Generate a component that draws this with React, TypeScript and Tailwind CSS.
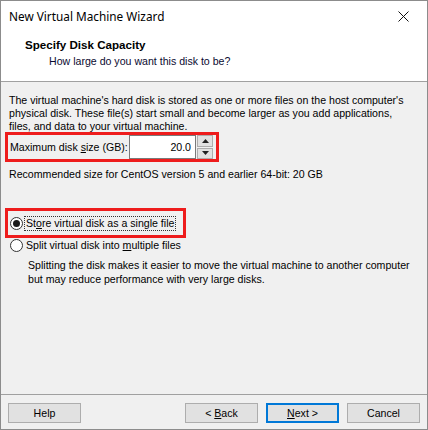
import React from "react";

function Radio({ checked }: { checked?: boolean }) {
  return (
    <span className="relative flex h-[13px] w-[13px] shrink-0 items-center justify-center rounded-full border border-[#333333] bg-white">
      {checked && <span className="h-[7px] w-[7px] rounded-full bg-[#1a1a1a]" />}
    </span>
  );
}

function Button({
  children,
  primary,
}: {
  children: React.ReactNode;
  primary?: boolean;
}) {
  return (
    <button
      className={
        primary
          ? "flex h-[20px] w-[73px] items-center justify-center border-2 border-[#0078d7] bg-[#e1e1e1] text-black"
          : "flex h-[20px] w-[73px] items-center justify-center border border-[#adadad] bg-[#e1e1e1] text-black"
      }
    >
      <span className="whitespace-pre">{children}</span>
    </button>
  );
}

export default function App() {
  return (
    <div
      className="flex h-[430px] w-[428px] flex-col whitespace-nowrap border border-[#8c8c8c] bg-[#f0f0f0] text-[10.6px] leading-[13px] text-black"
      style={{ fontFamily: '"Liberation Sans", Arial, sans-serif' }}
    >
      {/* Title bar */}
      <div className="flex h-[30px] shrink-0 items-center justify-between bg-white pl-[8px] pr-[18px]">
        <span
          className="text-[11.8px] text-[#000000]"
          style={{ fontFamily: '"Noto Sans", "Open Sans", sans-serif' }}
        >
          New Virtual Machine Wizard
        </span>
        <svg width="11" height="11" viewBox="0 0 11 11">
          <path d="M0.5 0.5 L10.5 10.5 M10.5 0.5 L0.5 10.5" stroke="#111" strokeWidth="1" />
        </svg>
      </div>

      {/* Header */}
      <div className="flex h-[51px] shrink-0 flex-col border-b border-[#a0a0a0] bg-white pt-[7px]">
        <div className="pl-[24px] text-[11.6px] font-bold leading-[14px]">Specify Disk Capacity</div>
        <div className="pl-[48px] pt-[2px] leading-[14px] text-[#0a0a30]">
          How large do you want this disk to be?
        </div>
      </div>

      {/* Body */}
      <div className="flex flex-1 flex-col pl-[8px] pr-[9px] pt-[12px]">
        <p>
          The virtual machine's hard disk is stored as one or more files on the host computer's
          <br />
          physical disk. These file(s) start small and become larger as you add applications,
          <br />
          files, and data to your virtual machine.
        </p>

        <div className="ml-[-4px] mt-[-1px] flex h-[30px] w-[214px] items-center border-[3px] border-[#ee1c1c] pl-[2px]">
          <span>
            Maximum disk <span className="underline">s</span>ize (GB):
          </span>
          <div className="ml-auto mr-[3px] flex h-[24px] items-center">
            <div className="flex h-[24px] w-[67px] items-center justify-end border border-[#7a7a7a] bg-white pr-[4px]">
              20.0
            </div>
            <div className="ml-[1px] flex h-[24px] w-[16px] flex-col gap-[1px]">
              <div className="flex flex-1 items-center justify-center border border-[#adadad] bg-[#e1e1e1]">
                <svg width="7" height="4" viewBox="0 0 7 4">
                  <path d="M3.5 0 L7 4 L0 4 Z" fill="#222" />
                </svg>
              </div>
              <div className="flex flex-1 items-center justify-center border border-[#adadad] bg-[#e1e1e1]">
                <svg width="7" height="4" viewBox="0 0 7 4">
                  <path d="M0 0 L7 0 L3.5 4 Z" fill="#222" />
                </svg>
              </div>
            </div>
          </div>
        </div>

        <p className="mt-[6px]">Recommended size for CentOS version 5 and earlier 64-bit: 20 GB</p>

        <div className="ml-[-4px] mt-[27px] flex h-[30px] w-[181px] items-center gap-[1px] border-[3px] border-[#ee1c1c] pl-[2px]">
          <Radio checked />
          <span className="border border-dotted border-[#333] px-[1px] leading-[13px]">
            St<span className="underline">o</span>re virtual disk as a single file
          </span>
        </div>

        <div className="mt-[1px] flex h-[13px] items-center gap-[3px] pl-[1px]">
          <Radio />
          <span>
            Split virtual disk into <span className="underline">m</span>ultiple files
          </span>
        </div>

        <p className="mt-[6px] pl-[19px] leading-[14px]">
          Splitting the disk makes it easier to move the virtual machine to another computer
          <br />
          but may reduce performance with very large disks.
        </p>
      </div>

      {/* Footer */}
      <div className="flex h-[35px] shrink-0 items-start border-t border-[#a0a0a0] pl-[7px] pt-[8px]">
        <Button>Help</Button>
        <div className="ml-[104px] flex gap-[8px]">
          <Button>
            {"< "}
            <span className="underline">B</span>ack
          </Button>
          <Button primary>
            <span className="underline">N</span>
            {"ext >"}
          </Button>
          <Button>Cancel</Button>
        </div>
      </div>
    </div>
  );
}
